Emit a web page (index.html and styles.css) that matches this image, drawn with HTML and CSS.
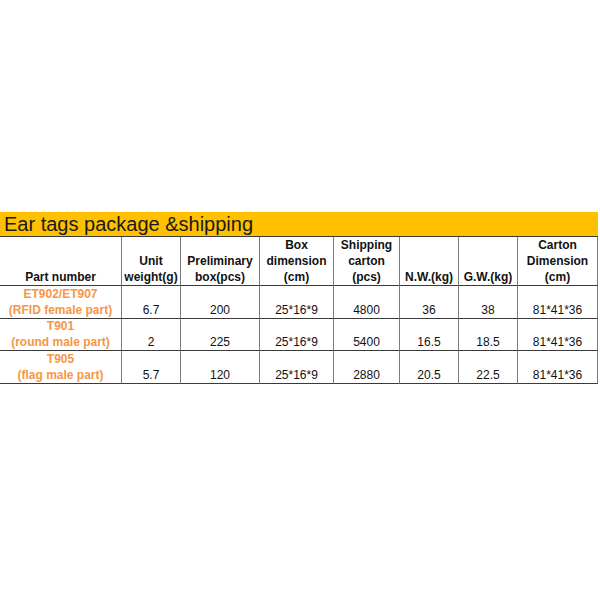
FILE: index.html
```html
<!DOCTYPE html>
<html lang="en">
<head>
<meta charset="utf-8">
<title>Ear tags package &amp; shipping</title>
<link rel="stylesheet" href="styles.css">
</head>
<body>
<div class="sheet">
  <div class="title">Ear tags package &amp;shipping</div>

  <div class="cell head">Part number</div>
  <div class="cell head">Unit<br>weight(g)</div>
  <div class="cell head">Preliminary<br>box(pcs)</div>
  <div class="cell head">Box<br>dimension<br>(cm)</div>
  <div class="cell head">Shipping<br>carton<br>(pcs)</div>
  <div class="cell head">N.W.(kg)</div>
  <div class="cell head">G.W.(kg)</div>
  <div class="cell head">Carton<br>Dimension<br>(cm)</div>

  <div class="cell part r1">ET902/ET907<br>(RFID female part)</div>
  <div class="cell r1">6.7</div>
  <div class="cell r1">200</div>
  <div class="cell r1">25*16*9</div>
  <div class="cell r1">4800</div>
  <div class="cell r1">36</div>
  <div class="cell r1">38</div>
  <div class="cell r1">81*41*36</div>

  <div class="cell part r2">T901<br>(round male part)</div>
  <div class="cell r2">2</div>
  <div class="cell r2">225</div>
  <div class="cell r2">25*16*9</div>
  <div class="cell r2">5400</div>
  <div class="cell r2">16.5</div>
  <div class="cell r2">18.5</div>
  <div class="cell r2">81*41*36</div>

  <div class="cell part r3">T905<br>(flag male part)</div>
  <div class="cell r3">5.7</div>
  <div class="cell r3">120</div>
  <div class="cell r3">25*16*9</div>
  <div class="cell r3">2880</div>
  <div class="cell r3">20.5</div>
  <div class="cell r3">22.5</div>
  <div class="cell r3">81*41*36</div>
</div>
</body>
</html>
```

FILE: styles.css
```css
html, body {
  margin: 0;
  padding: 0;
  background: #ffffff;
}

body {
  font-family: "Liberation Sans", Arial, sans-serif;
  color: #111111;
}

.sheet {
  margin-top: 212px;
  width: 598px;
  display: grid;
  grid-template-columns: 122px 59px 79px 74px 66px 59px 59px 80px;
  grid-auto-rows: auto;
}

.title {
  grid-column: 1 / -1;
  height: 24px;
  background: #ffc000;
  border-bottom: 1px solid #3a3a3a;
  font-size: 20px;
  line-height: 24px;
  padding-left: 4px;
  color: #1a1a1a;
  white-space: nowrap;
}

.cell {
  box-sizing: border-box;
  border-right: 1px solid #7a7a7a;
  border-bottom: 1px solid #3a3a3a;
  display: flex;
  flex-direction: column;
  justify-content: flex-end;
  align-items: center;
  text-align: center;
  font-size: 12px;
  line-height: 16px;
  white-space: nowrap;
  padding-bottom: 0;
}

.head {
  height: 49px;
  font-weight: bold;
}

.r1 { height: 33px; }
.r2 { height: 32px; }
.r3 { height: 33px; }

.part {
  color: #f79646;
  font-weight: bold;
}
```
